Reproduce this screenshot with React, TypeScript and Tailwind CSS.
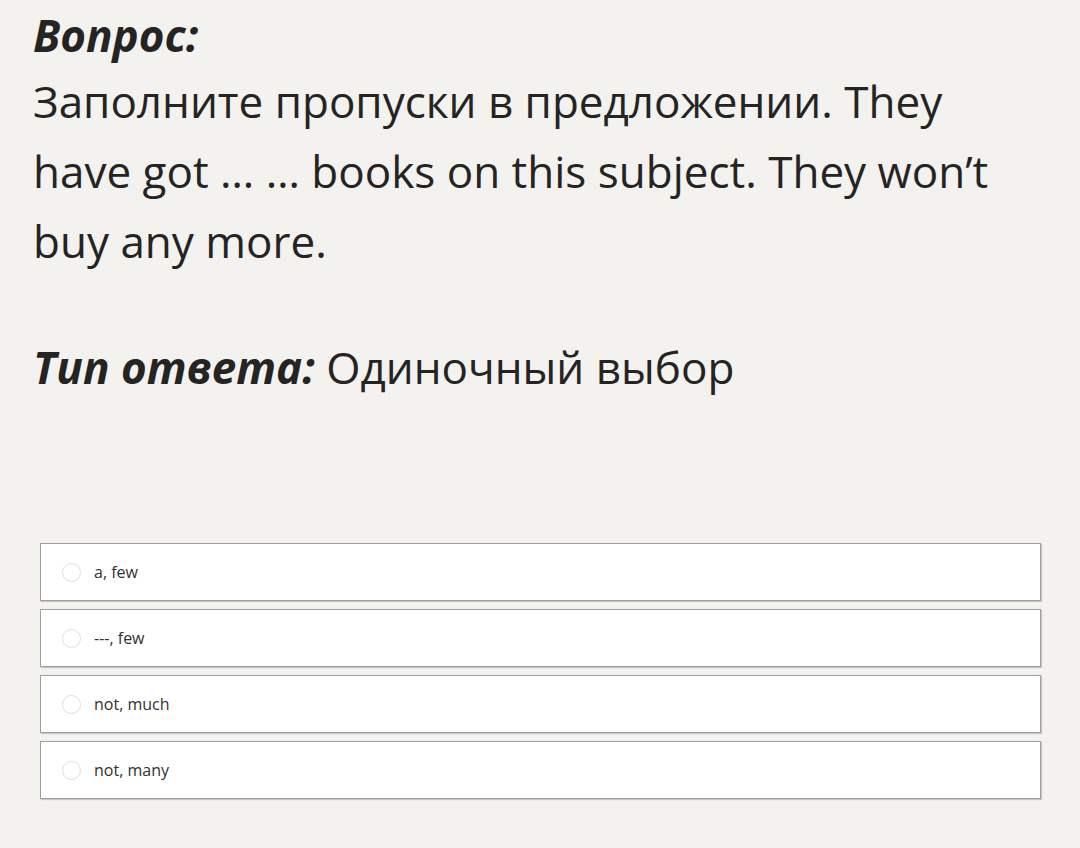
const options = ['a, few', '---, few', 'not, much', 'not, many']

export default function App() {
  return (
    <div className="min-h-[848px] bg-[#f3f2ef] px-[33px] pt-[4px] text-[#252423]" style={{ fontFamily: '"Open Sans", "Noto Sans", sans-serif' }}>
      <div className="w-[1000px] text-[44px] leading-[70px]">
        <p className="font-bold italic leading-[62px]">Вопрос:</p>
        <p>
          Заполните пропуски в предложении. They have got … … books on this subject. They won’t buy any
          more.
        </p>
      </div>
      <p className="mt-[60px] text-[44px] leading-[62px]">
        <span className="font-bold italic">Тип ответа:</span> Одиночный выбор
      </p>
      <div className="mt-[145px] ml-[7px] mr-[6px] flex flex-col gap-[8px]">
        {options.map((opt) => (
          <label
            key={opt}
            className="flex h-[58px] items-center border border-[#a19f9d] bg-white pl-[21px] shadow-[1px_1px_1px_#c8c6c4]"
          >
            <span className="h-[19px] w-[19px] rounded-full border border-[#e1dfdd]" />
            <span className="ml-[13px] text-[16px] text-[#323130]">{opt}</span>
          </label>
        ))}
      </div>
    </div>
  )
}
